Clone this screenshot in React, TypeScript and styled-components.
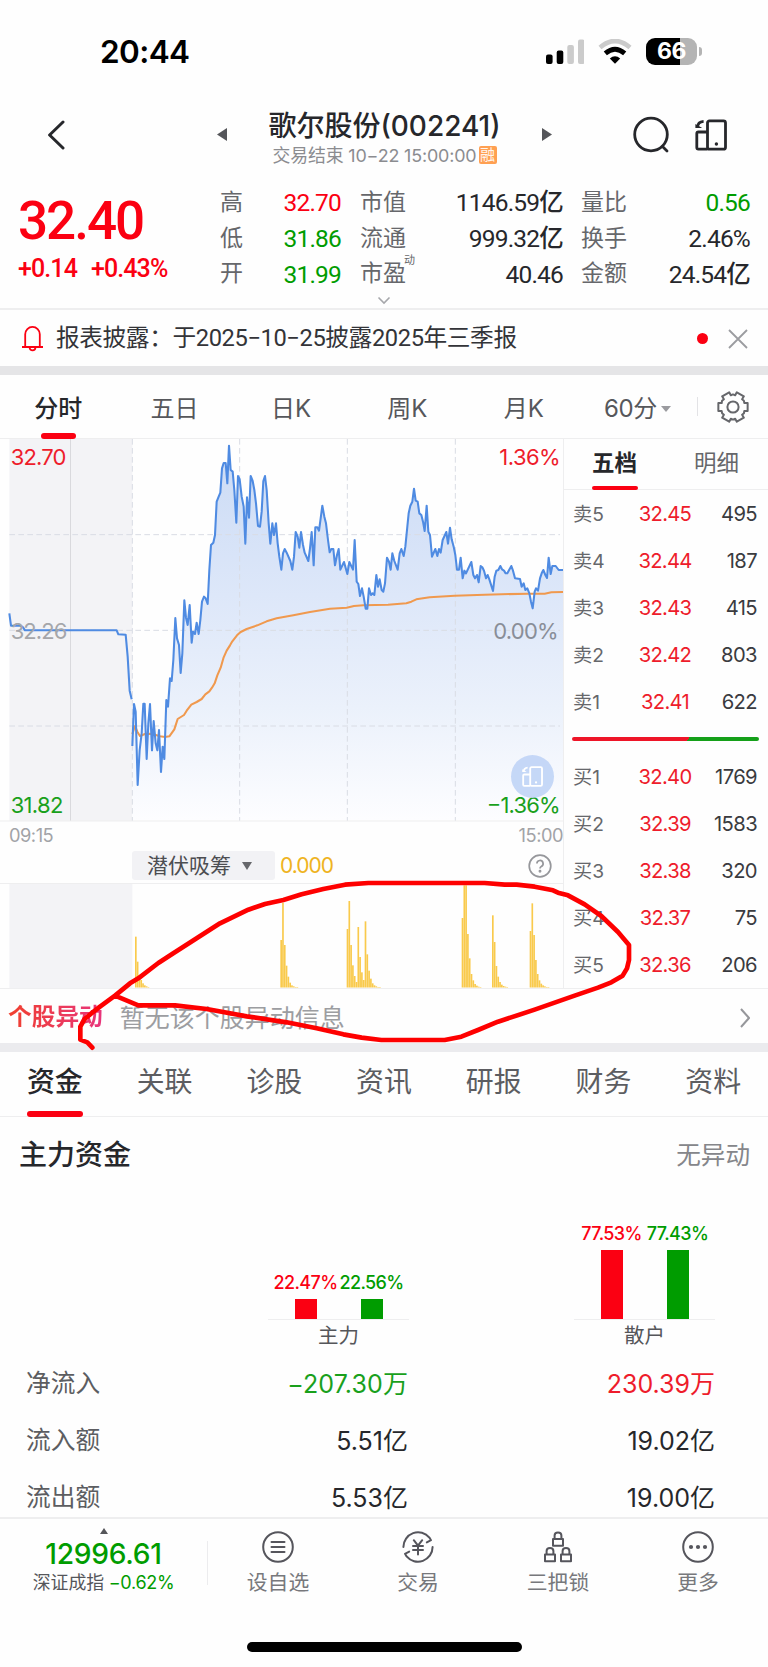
import React from "react";
import styled, { createGlobalStyle } from "styled-components";

const RED = "#fb0012";
const GREEN = "#009c00";
const INK = "#26272b";
const LINE = "#eeeeef";
const SANS = `Inter, "Noto Sans CJK SC", sans-serif`;
const DIN = `Roboto, "Noto Sans CJK SC", sans-serif`;

const Global = createGlobalStyle`
  *, *::before, *::after { box-sizing: border-box; }
  html, body { margin: 0; background: #fefefe; }
  body { font-family: ${SANS}; color: ${INK}; }
`;

const Screen = styled.main`
  position: relative;
  width: 768px;
  height: 1667px;
  overflow: hidden;
  background: #fefefe;
  display: flex;
  flex-direction: column;
`;

interface TxtProps { $s: number; $c?: string; $w?: number; $ls?: number; $din?: boolean }
const Txt = styled.span<TxtProps>`
  display: inline-block;
  white-space: nowrap;
  line-height: 1.2;
  font-family: ${(p) => (p.$din ? DIN : SANS)};
  font-size: ${(p) => p.$s}px;
  font-weight: ${(p) => p.$w ?? 400};
  color: ${(p) => p.$c ?? INK};
  letter-spacing: ${(p) => p.$ls ?? 0}px;
`;

/* ---------- status bar ---------- */
const StatusBar = styled.header`
  height: 102px;
  display: flex;
  align-items: center;
  padding: 1px 66px 0 100px;
  gap: 14px;
`;
const Spacer = styled.div`flex: 1;`;

const Signal = () => (
  <svg width="38" height="26" viewBox="0 0 38 26">
    <rect x="0" y="15.5" width="6.6" height="9.5" rx="2" fill="#000" />
    <rect x="10.7" y="11.5" width="6.6" height="13.5" rx="2" fill="#000" />
    <rect x="21.3" y="6" width="6.6" height="19" rx="2" fill="#cbcbcb" />
    <rect x="32" y="0.5" width="6.4" height="24.5" rx="2" fill="#cbcbcb" />
  </svg>
);
const Wifi = () => (
  <svg width="34" height="26" viewBox="0 0 34 26">
    <path d="M2 8.6Q17-4.6 32 8.6" fill="none" stroke="#cbcbcb" strokeWidth="4.6" />
    <path d="M7.3 14.4Q17 6 26.7 14.4" fill="none" stroke="#000" strokeWidth="4.8" />
    <path d="M11.8 19.6Q17 15 22.2 19.6L17 24.8Z" fill="#000" />
  </svg>
);
const BatteryBody = styled.div`
  width: 51px;
  height: 27px;
  border-radius: 9px;
  background: linear-gradient(90deg, #000 66%, #b4b4b4 66%);
  display: flex;
  align-items: center;
  justify-content: center;
`;
const Battery = styled.div`
  display: flex;
  align-items: center;
  gap: 2px;
  &::after {
    content: "";
    width: 3px;
    height: 9px;
    border-radius: 0 3px 3px 0;
    background: #b4b4b4;
  }
`;

/* ---------- title bar ---------- */
const TitleBar = styled.div`
  height: 82px;
  display: grid;
  grid-template-columns: 217px 335px 1fr;
  align-items: center;
`;
const BackBox = styled.div`padding: 0 0 17px 47px; display: flex;`;
const TitleMid = styled.div`
  display: flex;
  justify-content: space-between;
  align-items: center;
  padding-bottom: 17px;
`;
const TitleStack = styled.div`
  display: flex;
  flex-direction: column;
  align-items: center;
  margin-top: 7px;
`;
const SubLine = styled.div`
  display: flex;
  align-items: center;
  gap: 2px;
  margin-top: 1px;
`;
const MarginTag = styled.span`
  width: 18px;
  height: 18px;
  border-radius: 2px;
  background: #ffa052;
  color: #fff6ee;
  font-size: 15px;
  line-height: 17px;
  text-align: center;
`;
const TitleActions = styled.div`
  display: flex;
  align-items: center;
  gap: 26px;
  padding: 0 0 16px 81px;
`;

const Landscape = ({ size, color, w }: { size: number; color: string; w: number }) => (
  <svg width={size} height={size} viewBox="0 0 32 32" fill="none" stroke={color} strokeWidth={w} strokeLinejoin="round">
    <rect x="12.5" y="1.8" width="18" height="28.4" rx="2" />
    <path d="M12.5 13H3.4Q1.8 13 1.8 14.6V28.6Q1.8 30.2 3.4 30.2H12.5" />
    <path d="M2.6 8.5Q2.6 2.8 8.6 2.4" strokeWidth={w} />
    <path d="M0.4 9V5L7.2 9Z" fill={color} stroke="none" />
    <circle cx="21.4" cy="25" r="1.7" fill={color} stroke="none" />
  </svg>
);

/* ---------- quote ---------- */
const Quote = styled.section`
  height: 126px;
  display: flex;
  padding: 1px 18px 0 0;
  border-bottom: 2px solid ${LINE};
`;
const PriceBlock = styled.div`
  width: 220px;
  padding: 5px 0 0 18px;
  display: flex;
  flex-direction: column;
`;
const Changes = styled.div`display: flex; gap: 14px; margin-top: 0;`;
const StatCol = styled.div<{ $w: number; $ml: number }>`
  width: ${(p) => p.$w}px;
  margin-left: ${(p) => p.$ml}px;
`;
const Stat = styled.div`
  height: 35.7px;
  display: flex;
  align-items: center;
  justify-content: space-between;
`;
const Sup = styled.sup`
  font-size: 11px;
  line-height: 1;
  position: relative;
  top: -9px;
  left: -2px;
`;
const ExpandBox = styled.div`height: 0; display: flex; justify-content: center;
  svg { margin-top: -14px; }
`;

type StatT = [string, string, string];
const stats: { w: number; ml: number; rows: StatT[] }[] = [
  { w: 121, ml: 0, rows: [["高", "32.70", RED], ["低", "31.86", GREEN], ["开", "31.99", GREEN]] },
  { w: 203, ml: 19, rows: [["市值", "1146.59亿", INK], ["流通", "999.32亿", INK], ["市盈", "40.46", INK]] },
  { w: 169, ml: 18, rows: [["量比", "0.56", GREEN], ["换手", "2.46%", INK], ["金额", "24.54亿", INK]] },
];

/* ---------- notice ---------- */
const Notice = styled.div`
  height: 56px;
  display: flex;
  align-items: center;
  padding: 1px 20px 0 22px;
`;
const NoticeText = styled.div`flex: 1; padding-left: 13px;`;
const Dot = styled.i`width: 11px; height: 11px; border-radius: 50%; background: ${RED}; margin-right: 20px;`;
const Band = styled.div<{ $c: string; $h: number }>`height: ${(p) => p.$h}px; background: ${(p) => p.$c}; flex: none;`;

/* ---------- period tabs ---------- */
const Tab = styled.div<{ $w?: number; $bar?: number }>`
  ${(p) => (p.$w ? `width: ${p.$w}px;` : "flex: 1;")}
  display: flex;
  align-items: center;
  justify-content: center;
  position: relative;
  &::after {
    content: "";
    display: ${(p) => (p.$bar ? "block" : "none")};
    position: absolute;
    bottom: -1px;
    left: calc(50% - ${(p) => (p.$bar ?? 0) / 2}px);
    width: ${(p) => p.$bar ?? 0}px;
    height: 6px;
    border-radius: 3px;
    background: ${RED};
  }
`;
const PeriodTabs = styled.nav`
  height: 64px;
  display: flex;
  border-bottom: 1px solid ${LINE};
  ${Tab} { padding-top: 5px; }
`;
const PeriodMore = styled.div`
  width: 115px;
  padding: 5px 0 0 22px;
  display: flex;
  align-items: center;
  gap: 4px;
`;
const Settings = styled.div`
  flex: 1;
  display: flex;
  align-items: center;
  gap: 19px;
  &::before { content: ""; width: 1px; height: 19px; background: #e3e3e6; }
`;
const Gear = () => {
  const pts: string[] = [];
  for (let i = 0; i < 6; i++) {
    const a = (i * Math.PI) / 3;
    [[-0.34, 12], [-0.27, 15.2], [0.27, 15.2], [0.34, 12], [0.52, 12.6]].forEach(([d, r]) =>
      pts.push(`${(16 + r * Math.sin(a + d)).toFixed(2)},${(16 - r * Math.cos(a + d)).toFixed(2)}`)
    );
  }
  return (
    <svg width="32" height="32" viewBox="0 0 32 32" fill="none" stroke="#66676b" strokeWidth="2" strokeLinejoin="round">
      <polygon points={pts.join(" ")} transform="rotate(30 16 16)" />
      <circle cx="16" cy="16" r="5.6" />
    </svg>
  );
};

/* ---------- chart area ---------- */
const Market = styled.section`height: 550px; display: flex; border-bottom: 1px solid ${LINE};`;
const ChartCol = styled.div`flex: none; width: 564px; border-right: 1px solid ${LINE}; position: relative;
  svg { display: block; }
`;
const TimeAxis = styled.div`
  height: 29px;
  padding: 0 0 1px 9px;
  display: flex;
  align-items: center;
  justify-content: space-between;
`;
const IndicatorRow = styled.div`
  height: 33px;
  padding: 0 11px 3px 132px;
  display: flex;
  align-items: center;
  border-bottom: 1px solid ${LINE};
`;
const Pill = styled.div`
  width: 143px;
  height: 29px;
  border-radius: 3px;
  background: #f2f2f5;
  display: flex;
  align-items: center;
  padding-left: 15px;
  gap: 11px;
  margin-right: 5px;
`;
const FloatButton = styled.div`
  position: absolute;
  left: 511px;
  top: 316px;
  width: 43px;
  height: 43px;
  border-radius: 50%;
  background: rgba(190, 211, 246, 0.88);
  display: flex;
  align-items: center;
  justify-content: center;
`;

const pre = "28,700 33,737 62,737 69,742 75,751 350,751 355,763 377,764 383,830 389,932 395,958";
const main =
  "397,1098 402,972 407,995 413,1215 419,1110 425,1060 430,971 434,971 440,1137 445,1030 450,972 456,1111 461,1023 467,1090 472,1111 477,1050 483,1176 488,1100 493,1137 499,960 504,980 510,895 515,903 520,840 526,714 531,775 537,795 542,879 547,820 553,661 558,713 563,735 569,675 575,788 579,755 585,762 590,728 596,762 601,720 606,665 612,650 617,655 623,672 628,570 633,495 640,488 645,465 650,365 656,350 661,338 666,265 671,249 677,249 682,310 687,197 692,270 698,275 703,330 709,428 714,288 719,298 725,350 731,380 736,491 741,352 747,413 752,288 758,303 763,330 768,370 774,438 780,440 785,395 790,303 795,288 800,330 806,430 811,491 817,430 822,465 828,430 833,490 838,530 844,569 849,520 854,507 860,518 871,543 877,569 882,530 887,456 893,470 898,503 903,456 909,495 914,518 925,543 930,505 935,456 941,556 946,442 952,442 957,452 962,415 967,377 973,410 978,430 984,480 989,517 994,507 1000,507 1005,556 1011,525 1016,507 1021,569 1032,546 1042,582 1048,546 1059,569 1064,480 1070,605 1075,612 1080,648 1086,625 1091,650 1097,686 1102,686 1107,625 1113,645 1118,640 1123,645 1129,585 1134,620 1139,598 1145,630 1150,635 1155,610 1161,533 1167,545 1172,569 1177,520 1183,543 1193,569 1199,520 1204,507 1211,528 1216,500 1222,440 1226,400 1231,377 1237,365 1242,326 1247,362 1253,365 1258,400 1264,405 1269,425 1274,453 1280,377 1285,455 1290,465 1296,530 1306,507 1312,528 1317,507 1322,518 1328,480 1339,456 1344,491 1350,443 1355,478 1361,500 1366,525 1371,569 1377,569 1382,533 1388,595 1393,572 1398,580 1414,546 1420,585 1425,595 1431,585 1436,607 1442,558 1447,562 1452,572 1458,595 1463,585 1468,598 1479,633 1484,590 1489,572 1495,570 1501,558 1506,568 1512,572 1517,580 1522,580 1534,558 1539,572 1545,595 1560,597 1565,620 1571,610 1576,630 1582,625 1588,640 1593,665 1598,685 1604,635 1608,625 1614,632 1620,595 1625,580 1630,570 1636,585 1641,594 1646,533 1652,582 1657,558 1667,558 1676,570 1689,570";
const avg =
  "397,1062 405,1038 412,1055 420,1068 435,1062 450,1061 465,1064 480,1069 495,1071 508,1069 523,1048 533,1017 552,1005 560,992 574,974 590,966 605,957 616,943 628,934 636,923 644,910 652,886 662,863 671,832 680,812 690,796 697,784 711,766 722,756 740,747 772,736 800,724 830,715 880,706 930,696 990,686 1040,683 1062,678 1090,676 1164,674 1219,670 1234,665 1249,658 1289,652 1364,647 1454,644 1584,641 1634,641 1654,637 1689,636";

const chartLabels: { t: string; x: number; y: number; w: number; c: string }[] = [
  { t: "32.70", x: 32, y: 255, w: 167, c: "#ee1c2b" },
  { t: "1.36%", x: 1498, y: 255, w: 184, c: "#ee1c2b" },
  { t: "32.26", x: 32, y: 777, w: 170, c: "#a5a6aa" },
  { t: "0.00%", x: 1480, y: 777, w: 196, c: "#898e98" },
  { t: "31.82", x: 32, y: 1299, w: 158, c: "#19a01c" },
  { t: "−1.36%", x: 1460, y: 1299, w: 222, c: "#19a01c" },
];

const PriceChart = () => (
  <svg width="563" height="383" viewBox="0 177 1689 1149">
    <defs>
      <linearGradient id="fill" x1="0" y1="197" x2="0" y2="1320" gradientUnits="userSpaceOnUse">
        <stop offset="0" stopColor="#cbdbf5" />
        <stop offset="0.4" stopColor="#dde7f9" />
        <stop offset="0.7" stopColor="#ebf1fb" />
        <stop offset="1" stopColor="#fdfdff" />
      </linearGradient>
    </defs>
    <rect x="28" y="177" width="369" height="1146" fill="#f3f3f6" />
    <path d={`M397,1320 L${main.split(" ").join(" L")} L1689,1320 Z`} fill="url(#fill)" />
    <path d="M211.5 177V1323" stroke="#d9d9dd" strokeWidth="3" />
    <g stroke="#d9dce4" strokeWidth="3" strokeDasharray="17 10">
      <path d="M397 177V1323M719 177V1323M1042 177V1323M1366 177V1323" />
      <path d="M28 464H1680M28 751H1680M28 1038H1680" />
    </g>
    <path d="M0 1323H1689" stroke={LINE} strokeWidth="3" />
    <g fill="none" strokeWidth="6.2" strokeLinejoin="round">
      <polyline points={avg} stroke="#f0994e" />
      <polyline points={pre} stroke="#4f8be2" />
      <polyline points={main} stroke="#4f8be2" />
    </g>
    {chartLabels.map((l) => (
      <text key={l.t} x={l.x} y={l.y} textLength={l.w} fontSize="66" fontFamily="Inter" fill={l.c}>{l.t}</text>
    ))}
  </svg>
);

const spikes: [number, number[]][] = [
  [405, [290, 365, 405, 420, 430, 436, 439, 441]],
  [841, [300, 188, 315, 377, 410, 428, 436, 439, 441, 441]],
  [1040, [267, 183, 315, 376, 408, 426, 261, 351, 397, 420, 244, 343, 392, 416, 430, 436, 439, 441, 441]],
  [1385, [234, 136, 136, 282, 355, 402, 421, 432, 437, 440, 441]],
  [1476, [226, 306, 378, 410, 426, 434, 438, 440, 441]],
  [1589, [273, 190, 285, 360, 402, 421, 431, 436, 439, 441, 441]],
];
const SpikeChart = () => (
  <svg width="563" height="105" viewBox="0 132 1689 315">
    <rect x="28" y="132" width="369" height="313" fill="#f3f3f6" />
    <g fill="#f9ca4c">
      {spikes.map(([x0, tops]) =>
        tops.map((t, i) => <rect key={`${x0}-${i}`} x={x0 + i * 5.4} y={t} width="5" height={442.5 - t} />)
      )}
    </g>
  </svg>
);

/* ---------- order book ---------- */
const Book = styled.aside`flex: 1; min-width: 0; display: flex; flex-direction: column;`;
const BookTabs = styled.div`
  height: 51px;
  border-bottom: 1px solid ${LINE};
  display: flex;
  ${Tab} { padding-bottom: 2px; }
  ${Tab}::after { height: 4px; }
`;
const BookRow = styled.div`
  height: 47.2px;
  display: grid;
  grid-template-columns: 62px 1fr 62px;
  align-items: center;
  padding: 2px 11px 0 9px;
  text-align: right;
  & > :first-child { text-align: left; }
  & > :nth-child(2) { text-align: center; }
`;
const Ratio = styled.div`
  height: 28.4px;
  padding: 0 9px 0 8px;
  display: flex;
  align-items: center;
  &::before {
    content: "";
    flex: 1;
    height: 4px;
    border-radius: 2px;
    background: linear-gradient(120deg, #ee1528 0 62%, #15a01a 62%);
  }
`;
const sells = [["卖5", "32.45", "495"], ["卖4", "32.44", "187"], ["卖3", "32.43", "415"], ["卖2", "32.42", "803"], ["卖1", "32.41", "622"]];
const buys = [["买1", "32.40", "1769"], ["买2", "32.39", "1583"], ["买3", "32.38", "320"], ["买4", "32.37", "75"], ["买5", "32.36", "206"]];
const Level = ({ r }: { r: string[] }) => (
  <BookRow>
    <Txt $s={19.2} $c="#66676b">{r[0]}</Txt>
    <Txt $s={20.2} $c="#ee1c2b" $ls={-0.7}>{r[1]}</Txt>
    <Txt $s={20.2} $c="#3a3b3f" $ls={-0.6}>{r[2]}</Txt>
  </BookRow>
);

/* ---------- unusual movement ---------- */
const Movement = styled.div`
  height: 54px;
  display: flex;
  align-items: center;
  padding: 3px 18px 0 8px;
`;
const GradientLabel = styled(Txt)`
  background: linear-gradient(90deg, #f0402e, #e8357c);
  background-clip: text;
  -webkit-text-fill-color: transparent;
  margin-right: 17px;
`;

/* ---------- detail tabs ---------- */
const DetailTabs = styled.nav`
  height: 65px;
  display: flex;
  border-bottom: 1px solid ${LINE};
  ${Tab} { padding-bottom: 2px; }
`;

/* ---------- funds ---------- */
const FundsHead = styled.div`
  height: 78px;
  display: flex;
  align-items: center;
  justify-content: space-between;
  padding: 0 18px 0 19px;
`;
const FundBars = styled.div`
  height: 160px;
  display: flex;
  align-items: flex-end;
  padding: 0 0 6px 268px;
  gap: 165px;
`;
const FundGroup = styled.div`width: 141px; text-align: center;`;
const Pair = styled.div`
  display: flex;
  justify-content: center;
  gap: 2px;
  border-bottom: 1px solid ${LINE};
  margin-bottom: 4px;
`;
const BarCell = styled.div`width: 64px; display: flex; flex-direction: column; align-items: center; gap: 6px;`;
const Bar = styled.i<{ $c: string }>`width: 22px; background: ${(p) => p.$c};`;
const groups = [
  { n: "主力", up: 22.47, down: 22.56, h: 20 },
  { n: "散户", up: 77.53, down: 77.43, h: 69 },
];
const FundTable = styled.div`
  height: 162px;
  overflow: hidden;
`;
const FundRow = styled.div`
  height: 57.3px;
  display: grid;
  grid-template-columns: 150px 232px 307px;
  align-items: center;
  padding-left: 26px;
  text-align: right;
  & > :first-child { text-align: left; }
`;

/* ---------- bottom bar ---------- */
const BottomBar = styled.footer`
  height: 150px;
  border-top: 2px solid ${LINE};
  display: flex;
  flex-direction: column;
  align-items: center;
`;
const BottomRow = styled.div`display: flex; width: 100%; height: 123px;`;
const IndexBox = styled.div`
  width: 207px;
  display: flex;
  flex-direction: column;
  align-items: center;
  padding-top: 9px;
  svg { display: block; margin-bottom: 4px; }
`;
const Sep = styled.div`width: 1px; height: 44px; margin-top: 22px; background: #ececee;`;
const Action = styled.div`
  flex: 1;
  display: flex;
  flex-direction: column;
  align-items: center;
  padding-top: 11px;
  gap: 7px;
`;
const HomeIndicator = styled.div`width: 275px; height: 10px; border-radius: 5px; background: #000;`;

const ic = { width: 34, height: 34, viewBox: "0 0 34 34", fill: "none", stroke: "#55555c", strokeWidth: 2, strokeLinecap: "round" as const, strokeLinejoin: "round" as const };
const ListIcon = () => (
  <svg {...ic}><circle cx="17" cy="17" r="14.8" /><path d="M10.5 12H23.5M10.5 17H23.5M10.5 22H23.5" /></svg>
);
const TradeIcon = () => (
  <svg {...ic}>
    <path d="M2.4 17A14.7 14.7 0 0 1 28.4 7.6L30 10.2L25.8 12.4" />
    <path d="M31.6 17A14.7 14.7 0 0 1 5.6 26.4L4 23.8L8.2 21.6" />
    <path d="M12.8 10.2L17 15.6L21.2 10.2M17 15.6V24.4M12 16H22M12 20H22" />
  </svg>
);
const LocksIcon = () => (
  <svg {...ic} strokeLinecap="butt">
    <rect x="12" y="9" width="10" height="6.8" /><path d="M13.6 9V5.6Q13.6 2.6 17 2.6T20.4 5.6V9" />
    <rect x="4" y="24.4" width="10" height="6.8" /><path d="M5.6 24.4V21Q5.6 18 9 18T12.4 21V24.4" />
    <rect x="20" y="24.4" width="10" height="6.8" /><path d="M21.6 24.4V21Q21.6 18 25 18T28.4 21V24.4" />
  </svg>
);
const MoreIcon = () => (
  <svg {...ic}>
    <circle cx="17" cy="17" r="14.8" />
    <g fill="#55555c" stroke="none"><circle cx="10" cy="17" r="2.1" /><circle cx="17" cy="17" r="2.1" /><circle cx="24" cy="17" r="2.1" /></g>
  </svg>
);
const actions: [React.FC, string][] = [[ListIcon, "设自选"], [TradeIcon, "交易"], [LocksIcon, "三把锁"], [MoreIcon, "更多"]];

/* ---------- hand-drawn marker ---------- */
const Marker = styled.svg`position: absolute; left: 0; top: 860px; pointer-events: none;`;
const markerPts =
  "277,623 262,607 241,599 241,560 253,538 273,521 300,500 345,467 390,430 415,415 475,369 520,340 590,295 660,250 745,209 795,192 850,180 905,163 970,147 1035,134 1105,129 1454,129 1514,134 1550,134 1604,140 1659,151 1674,158 1704,166 1754,193 1804,228 1854,276 1887,315 1887,360 1881,385 1868,407 1834,427 1794,443 1724,467 1604,509 1494,545 1434,570 1384,590 1334,600 1144,600 1085,593 1030,583 950,565 860,547 740,529 620,507 525,496 415,496 345,467";

const Triangle = ({ d, w, h, c }: { d: string; w: number; h: number; c: string }) => (
  <svg width={w} height={h} viewBox={`0 0 ${w} ${h}`}><path d={d} fill={c} /></svg>
);

export default function App() {
  return (
    <Screen>
      <Global />
      <StatusBar>
        <Txt $s={31.5} $w={600} $c="#000" $ls={-0.6}>20:44</Txt>
        <Spacer />
        <Signal />
        <Wifi />
        <Battery><BatteryBody><Txt $s={23} $w={650} $c="#fff" $ls={-0.4}>66</Txt></BatteryBody></Battery>
      </StatusBar>

      <TitleBar>
        <BackBox>
          <svg width="18" height="30" viewBox="0 0 18 30" fill="none" stroke={INK} strokeWidth="3" strokeLinecap="round" strokeLinejoin="round"><path d="M16 2L2.6 15L16 28" /></svg>
        </BackBox>
        <TitleMid>
          <Triangle w={10} h={13} c="#55565a" d="M10 0V13L0 6.5Z" />
          <TitleStack>
            <Txt $s={28} $w={500} $ls={0}>歌尔股份(002241)</Txt>
            <SubLine>
              <Txt $s={17.9} $c="#8b8c90" $ls={-0.15}>交易结束 10−22 15:00:00</Txt>
              <MarginTag>融</MarginTag>
            </SubLine>
          </TitleStack>
          <Triangle w={10} h={13} c="#55565a" d="M0 0V13L10 6.5Z" />
        </TitleMid>
        <TitleActions>
          <svg width="36" height="38" viewBox="0 0 36 38" fill="none" stroke={INK} strokeWidth="2.8" strokeLinecap="round"><circle cx="18" cy="18.5" r="16.3" /><path d="M29.5 30.5L34 35" /></svg>
          <Landscape size={32} color={INK} w={2.8} />
        </TitleActions>
      </TitleBar>

      <Quote>
        <PriceBlock>
          <Txt $din $s={53} $w={500} $c={RED} $ls={-2}>32.40</Txt>
          <Changes>
            <Txt $din $s={25} $w={500} $c={RED} $ls={-0.9}>+0.14</Txt>
            <Txt $din $s={25} $w={500} $c={RED} $ls={-0.9}>+0.43%</Txt>
          </Changes>
        </PriceBlock>
        {stats.map((col, i) => (
          <StatCol key={i} $w={col.w} $ml={col.ml}>
            {col.rows.map(([k, v, c]) => (
              <Stat key={k}>
                <Txt $s={23} $c="#66676b">{k}{k === "市盈" && <Sup>动</Sup>}</Txt>
                <Txt $din $s={24.5} $w={450} $c={c} $ls={-0.8}>{v}</Txt>
              </Stat>
            ))}
          </StatCol>
        ))}
      </Quote>
      <ExpandBox>
        <svg width="14" height="9" viewBox="0 0 14 9" fill="none" stroke="#a6a7ab" strokeWidth="1.6"><path d="M1.5 1.5L7 7L12.5 1.5" /></svg>
      </ExpandBox>

      <Notice>
        <svg width="21" height="27" viewBox="0 0 21 27" fill="none" stroke={RED} strokeWidth="1.8" strokeLinejoin="round"><path d="M3.2 22V9.2A7.3 7.3 0 0 1 17.8 9.2V22M0 22H21M7.6 22.5A2.9 2.9 0 0 0 13.4 22.5" /></svg>
        <NoticeText><Txt $din $s={23.7} $c="#333438" $ls={-0.4}>报表披露：于2025−10−25披露2025年三季报</Txt></NoticeText>
        <Dot />
        <svg width="20" height="20" viewBox="0 0 20 20" stroke="#9b9ca0" strokeWidth="1.8"><path d="M1 1L19 19M19 1L1 19" /></svg>
      </Notice>
      <Band $h={9} $c="#e5e5e7" />

      <PeriodTabs>
        <Tab $w={116.4} $bar={35}><Txt $s={24} $w={500}>分时</Txt></Tab>
        {["五日", "日K", "周K", "月K"].map((t) => (
          <Tab key={t} $w={116.4}><Txt $s={24} $c="#56575b">{t}</Txt></Tab>
        ))}
        <PeriodMore>
          <Txt $s={24} $c="#56575b" $ls={-0.4}>60分</Txt>
          <Triangle w={10} h={6} c="#9a9b9f" d="M0 0H10L5 6Z" />
        </PeriodMore>
        <Settings><Gear /></Settings>
      </PeriodTabs>

      <Market>
        <ChartCol>
          <PriceChart />
          <FloatButton><Landscape size={21} color="#fff" w={2.8} /></FloatButton>
          <TimeAxis>
            <Txt $s={18.3} $c="#a2a3a7" $ls={-0.5}>09:15</Txt>
            <Txt $s={18.3} $c="#a2a3a7" $ls={-0.5}>15:00</Txt>
          </TimeAxis>
          <IndicatorRow>
            <Pill>
              <Txt $s={21} $c="#4c4d51">潜伏吸筹</Txt>
              <Triangle w={10} h={8} c="#66676b" d="M0 0H10L5 8Z" />
            </Pill>
            <Txt $s={21} $c="#efb321" $ls={-1}>0.000</Txt>
            <Spacer />
            <svg width="24" height="24" viewBox="0 0 24 24" fill="none" stroke="#96979b" strokeWidth="1.7"><circle cx="12" cy="12" r="10.8" /><path d="M8.9 9.6A3.1 3.1 0 1 1 13.3 12.4Q12 13.1 12 14.6" /><circle cx="12" cy="17.3" r="0.6" fill="#96979b" /></svg>
          </IndicatorRow>
          <SpikeChart />
        </ChartCol>
        <Book>
          <BookTabs>
            <Tab $w={101} $bar={46}><Txt $s={22.5} $w={600}>五档</Txt></Tab>
            <Tab><Txt $s={22.5} $c="#66676b">明细</Txt></Tab>
          </BookTabs>
          {sells.map((r) => <Level key={r[0]} r={r} />)}
          <Ratio />
          {buys.map((r) => <Level key={r[0]} r={r} />)}
        </Book>
      </Market>

      <Movement>
        <GradientLabel $s={23.7} $w={700}>个股异动</GradientLabel>
        <Txt $s={25} $c="#9c9da1">暂无该个股异动信息</Txt>
        <Spacer />
        <svg width="10" height="20" viewBox="0 0 10 20" fill="none" stroke="#96979b" strokeWidth="2"><path d="M1 1L9 10L1 19" /></svg>
      </Movement>
      <Band $h={9} $c="#ebebee" />

      <DetailTabs>
        {["资金", "关联", "诊股", "资讯", "研报", "财务", "资料"].map((t, i) => (
          <Tab key={t} $bar={i === 0 ? 56 : undefined}>
            <Txt $s={27.9} $w={i === 0 ? 500 : 400} $c={i === 0 ? INK : "#5c5d61"}>{t}</Txt>
          </Tab>
        ))}
      </DetailTabs>

      <FundsHead>
        <Txt $s={28} $w={500}>主力资金</Txt>
        <Txt $s={24.6} $c="#85868a">无异动</Txt>
      </FundsHead>
      <FundBars>
        {groups.map((g) => (
          <FundGroup key={g.n}>
            <Pair>
              <BarCell><Txt $s={18} $w={500} $c={RED} $ls={-0.6}>{g.up}%</Txt><Bar $c={RED} style={{ height: g.h }} /></BarCell>
              <BarCell><Txt $s={18} $w={500} $c={GREEN} $ls={-0.6}>{g.down}%</Txt><Bar $c={GREEN} style={{ height: g.h }} /></BarCell>
            </Pair>
            <Txt $s={20.5} $c="#55565a">{g.n}</Txt>
          </FundGroup>
        ))}
      </FundBars>
      <FundTable>
        <FundRow><Txt $s={24.7} $c="#5c5d61">净流入</Txt><Txt $s={25} $c="#19a01c" $ls={0.1}>−207.30万</Txt><Txt $s={25} $c="#ee1c2b" $ls={0}>230.39万</Txt></FundRow>
        <FundRow><Txt $s={24.7} $c="#5c5d61">流入额</Txt><Txt $s={25}>5.51亿</Txt><Txt $s={25}>19.02亿</Txt></FundRow>
        <FundRow><Txt $s={24.7} $c="#5c5d61">流出额</Txt><Txt $s={25}>5.53亿</Txt><Txt $s={25}>19.00亿</Txt></FundRow>
      </FundTable>

      <BottomBar>
        <BottomRow>
          <IndexBox>
            <Triangle w={8} h={6} c="#55565a" d="M4 0L8 6H0Z" />
            <Txt $s={28.2} $w={500} $c={GREEN} $ls={-0.3}>12996.61</Txt>
            <div>
              <Txt $s={17.9} $c="#55565a">深证成指</Txt>{" "}
              <Txt $s={18} $c={GREEN} $ls={-0.3}>−0.62%</Txt>
            </div>
          </IndexBox>
          <Sep />
          {actions.map(([Icon, t]) => (
            <Action key={t}><Icon /><Txt $s={20.8} $c="#77787c">{t}</Txt></Action>
          ))}
        </BottomRow>
        <HomeIndicator />
      </BottomBar>

      <Marker width="768" height="200" viewBox="0 60 2304 600">
        <polyline points={markerPts} fill="none" stroke="#fe0000" strokeWidth="14" strokeLinejoin="round" strokeLinecap="round" />
      </Marker>
    </Screen>
  );
}
